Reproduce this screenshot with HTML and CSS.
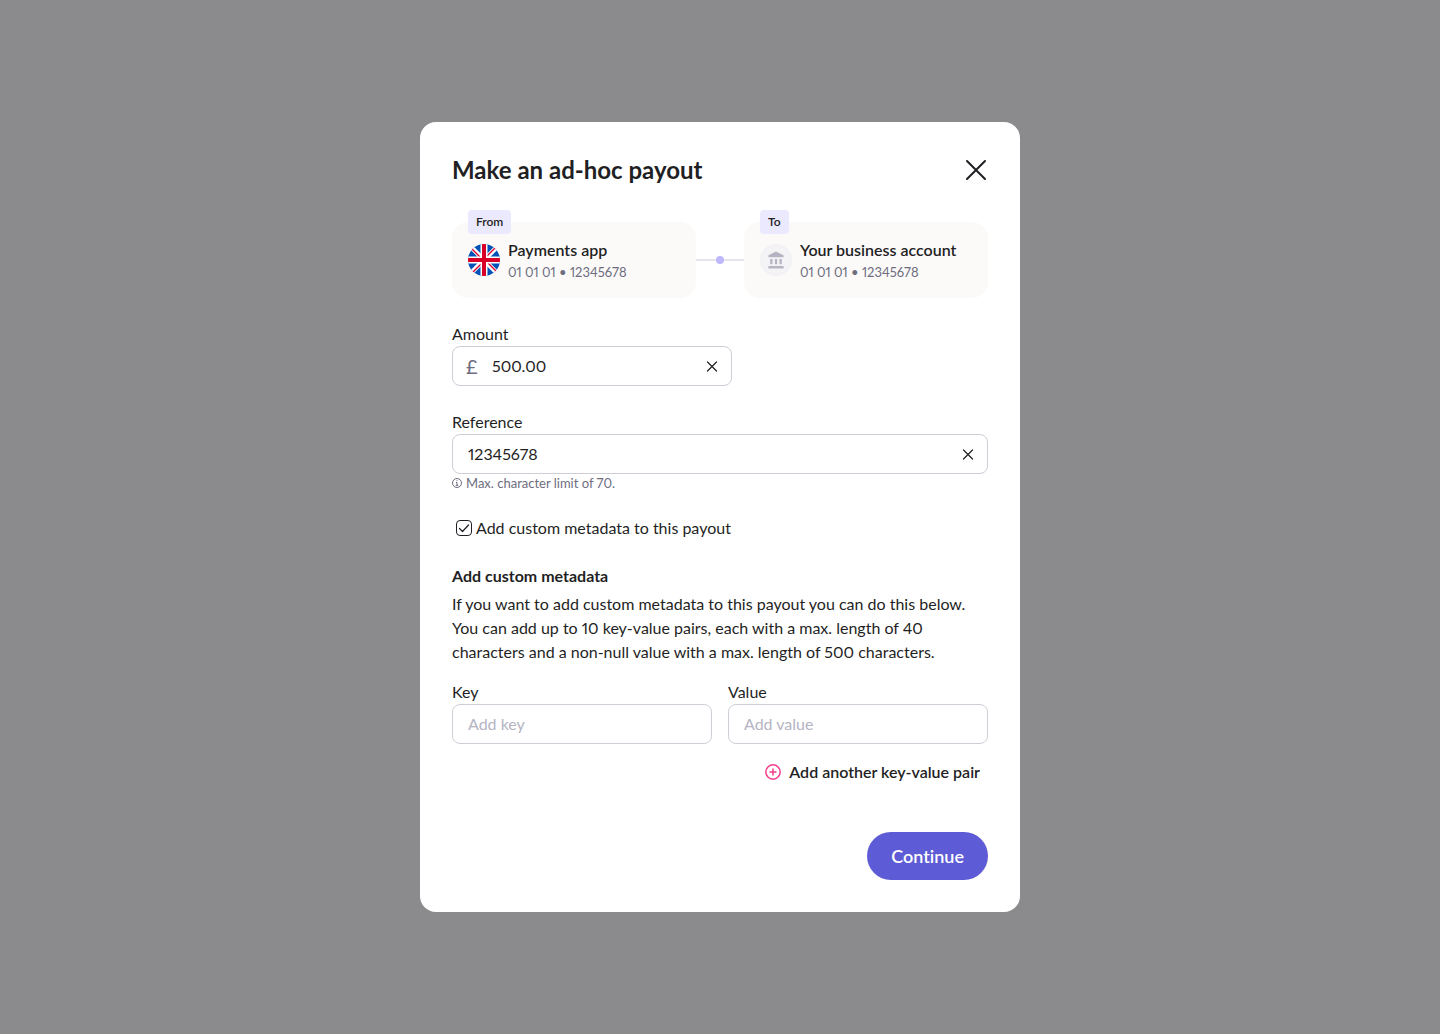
FILE: index.html
```html
<!DOCTYPE html>
<html lang="en">
<head>
  <meta charset="UTF-8">
  <meta name="viewport" content="width=device-width, initial-scale=1.0">
  <title>Make an ad-hoc payout</title>
  <link rel="stylesheet" href="styles.css">
</head>
<body>
  <main class="modal" role="dialog" aria-labelledby="modal-title">
    <header class="modal-header">
      <h1 id="modal-title">Make an ad-hoc payout</h1>
      <button class="icon-btn" type="button" aria-label="Close">
        <svg width="24" height="24" viewBox="0 0 24 24" fill="none" stroke="#1f1f24" stroke-width="2" stroke-linecap="round"><path d="M3 3l18 18M21 3L3 21"/></svg>
      </button>
    </header>

    <form class="payout-form">
      <div class="transfer">
        <section class="account">
          <span class="badge">From</span>
          <svg width="32" height="32" viewBox="0 0 32 32">
            <clipPath id="round"><circle cx="16" cy="16" r="16"/></clipPath>
            <g clip-path="url(#round)">
              <path fill="#0052b4" d="M0 0h32v32H0z"/>
              <path stroke="#fff" stroke-width="4.6" d="M0 0l32 32M32 0L0 32"/>
              <path stroke="#d80027" stroke-width="1.4" d="M3 4l10 10M29 28L19 18M28 3L18 13M4 29l10-10"/>
              <path stroke="#fff" stroke-width="7" d="M16 0v32M0 16h32"/>
              <path stroke="#d80027" stroke-width="4" d="M16 0v32M0 16h32"/>
            </g>
          </svg>
          <div>
            <h2 class="account-name">Payments app</h2>
            <p class="account-number">01 01 01 • 12345678</p>
          </div>
        </section>
        <div class="connector"><span class="dot"></span></div>
        <section class="account">
          <span class="badge">To</span>
          <svg width="32" height="32" viewBox="0 0 32 32">
            <circle cx="16" cy="16" r="15.5" fill="#f4f4f7" stroke="#f0f0f4"/>
            <path fill="#b5b4c3" d="M16 7.5l7.6 3.8v1.9H8.4v-1.9zM10.2 15h2.3v5.2h-2.3zM14.9 15h2.3v5.2h-2.3zM19.5 15h2.3v5.2h-2.3zM8.4 22h15.2v2.5H8.4z"/>
          </svg>
          <div>
            <h2 class="account-name">Your business account</h2>
            <p class="account-number">01 01 01 • 12345678</p>
          </div>
        </section>
      </div>

      <div class="field field-amount">
        <label for="amount">Amount</label>
        <div class="input-box">
          <span class="currency">£</span>
          <input id="amount" type="text" inputmode="decimal" value="500.00">
          <button class="icon-btn" type="button" aria-label="Clear amount">
            <svg width="16" height="16" viewBox="0 0 16 16" fill="none" stroke="#1f1f24" stroke-width="1.2" stroke-linecap="round"><path d="M3.5 4l9 9M12.5 4l-9 9"/></svg>
          </button>
        </div>
      </div>

      <div class="field">
        <label for="reference">Reference</label>
        <div class="input-box">
          <input id="reference" type="text" maxlength="70" value="12345678">
          <button class="icon-btn" type="button" aria-label="Clear reference">
            <svg width="16" height="16" viewBox="0 0 16 16" fill="none" stroke="#1f1f24" stroke-width="1.2" stroke-linecap="round"><path d="M3.5 4l9 9M12.5 4l-9 9"/></svg>
          </button>
        </div>
        <p class="hint">
          <svg width="10" height="10" viewBox="0 0 10 10" fill="none" stroke="#6e6d80"><circle cx="5" cy="5" r="4.5"/><path d="M4 4.5h1v3M3.7 7.4h2.6M4.5 2.7h1"/></svg>
          Max. character limit of 70.
        </p>
      </div>

      <div class="check">
        <input id="metadata" type="checkbox" checked>
        <svg class="tick" width="16" height="16" viewBox="0 0 16 16" fill="none" stroke="#1f1f24" stroke-width="1.2" stroke-linecap="round" stroke-linejoin="round"><path d="M3.5 8.5l3 3 6-6.5"/></svg>
        <label for="metadata">Add custom metadata to this payout</label>
      </div>

      <section class="metadata">
        <h2>Add custom metadata</h2>
        <p>If you want to add custom metadata to this payout you can do this below. You can add up to 10 key-value pairs, each with a max. length of 40 characters and a non-null value with a max. length of 500 characters.</p>
        <div class="pair">
          <div class="field">
            <label for="key">Key</label>
            <div class="input-box"><input id="key" type="text" placeholder="Add key"></div>
          </div>
          <div class="field">
            <label for="value">Value</label>
            <div class="input-box"><input id="value" type="text" placeholder="Add value"></div>
          </div>
        </div>
        <button class="add-btn" type="button">
          <svg width="16" height="16" viewBox="0 0 16 16" fill="none" stroke="#f23d8f" stroke-width="1.5" stroke-linecap="round"><circle cx="8" cy="8" r="7.2"/><path d="M8 5v6M5 8h6"/></svg>
          Add another key-value pair
        </button>
      </section>

      <button class="continue-btn" type="submit">Continue</button>
    </form>
  </main>
</body>
</html>
```
FILE: styles.css
```css
* {
  box-sizing: border-box;
}
body {
  margin: 0;
  min-height: 100vh;
  display: flex;
  align-items: center;
  justify-content: center;
  background-color: #8b8b8d;
  color: #1f1f24;
  font-family: Lato, "Liberation Sans", sans-serif;
  font-size: 16px;
  line-height: 24px;
  font-variant-ligatures: none;
  font-variant-numeric: proportional-nums;
}
h1, h2, p {
  margin: 0;
}
svg {
  display: block;
  flex-shrink: 0;
}
input, button {
  font: inherit;
  font-variant-ligatures: none;
  font-variant-numeric: proportional-nums;
  color: inherit;
}
button {
  border: none;
  background: none;
  padding: 0;
  cursor: pointer;
}
.modal {
  width: 100%;
  max-width: 600px;
  padding: 32px;
  background-color: #fff;
  border-radius: 16px;
}
.modal-header {
  display: flex;
  align-items: center;
  justify-content: space-between;
  margin-bottom: 36px;
}
.modal-header h1 {
  font-size: 24px;
  line-height: 32px;
  font-weight: 700;
}
.payout-form {
  display: flex;
  flex-direction: column;
  gap: 24px;
}

/* from / to accounts */
.transfer {
  display: grid;
  grid-template-columns: 1fr 48px 1fr;
  align-items: center;
}
.account {
  position: relative;
  display: flex;
  align-items: center;
  gap: 8px;
  padding: 16px;
  background-color: #fbfaf9;
  border-radius: 16px;
}
.badge {
  position: absolute;
  top: -12px;
  left: 16px;
  padding: 0 8px;
  background-color: #ebe9fe;
  border-radius: 4px;
  font-size: 12px;
  font-weight: 600;
}
.account-name {
  font-size: 16px;
  font-weight: 600;
  white-space: nowrap;
}
.account-number {
  color: #6e6d80;
  font-size: 13px;
  line-height: 20px;
}
.connector {
  display: flex;
  align-items: center;
}
.connector::before,
.connector::after {
  content: "";
  flex: 1;
  height: 2px;
  background-color: #e6e5ec;
}
.dot {
  width: 8px;
  height: 8px;
  border-radius: 50%;
  background-color: #bdb7fb;
}

/* fields */
.field label {
  display: block;
}
.field-amount {
  width: 280px;
}
.input-box {
  display: flex;
  align-items: center;
  height: 40px;
  padding: 0 11px 0 15px;
  border: 1px solid #cfced6;
  border-radius: 8px;
}
.field-amount .input-box {
  padding-left: 13px;
}
.input-box:focus-within {
  border-color: #5e5bd6;
}
.input-box input {
  flex: 1;
  min-width: 0;
  padding: 0;
  border: none;
  outline: none;
  background: none;
}
.input-box input::placeholder {
  color: #b5b4c3;
  opacity: 1;
}
.currency {
  width: 26px;
  color: #6e6d80;
  font-size: 20px;
}
.hint {
  display: flex;
  align-items: center;
  gap: 4px;
  color: #6e6d80;
  font-size: 13px;
  line-height: 18px;
}
.check {
  position: relative;
  display: flex;
  align-items: center;
  gap: 4px;
  padding-left: 4px;
}
.check input {
  appearance: none;
  width: 16px;
  height: 16px;
  margin: 0;
  border: 1px solid #1f1f24;
  border-radius: 4px;
}
.tick {
  position: absolute;
  left: 4px;
  pointer-events: none;
  visibility: hidden;
}
.check input:checked + .tick {
  visibility: visible;
}

/* metadata */
.metadata {
  display: flex;
  flex-direction: column;
}
.metadata h2 {
  margin-bottom: 4px;
  font-size: 16px;
  font-weight: 700;
}
.pair {
  display: grid;
  grid-template-columns: 1fr 1fr;
  gap: 16px;
  margin: 16px 0;
}
.add-btn {
  display: flex;
  align-items: center;
  align-self: flex-end;
  gap: 8px;
  padding-right: 8px;
  font-weight: 600;
}
.continue-btn {
  align-self: flex-end;
  height: 48px;
  margin-top: 24px;
  padding: 0 24px;
  background-color: #5e5bd6;
  border-radius: 24px;
  color: #fff;
  font-size: 18px;
  font-weight: 600;
}
.continue-btn:hover {
  background-color: #4b48c0;
}
```
